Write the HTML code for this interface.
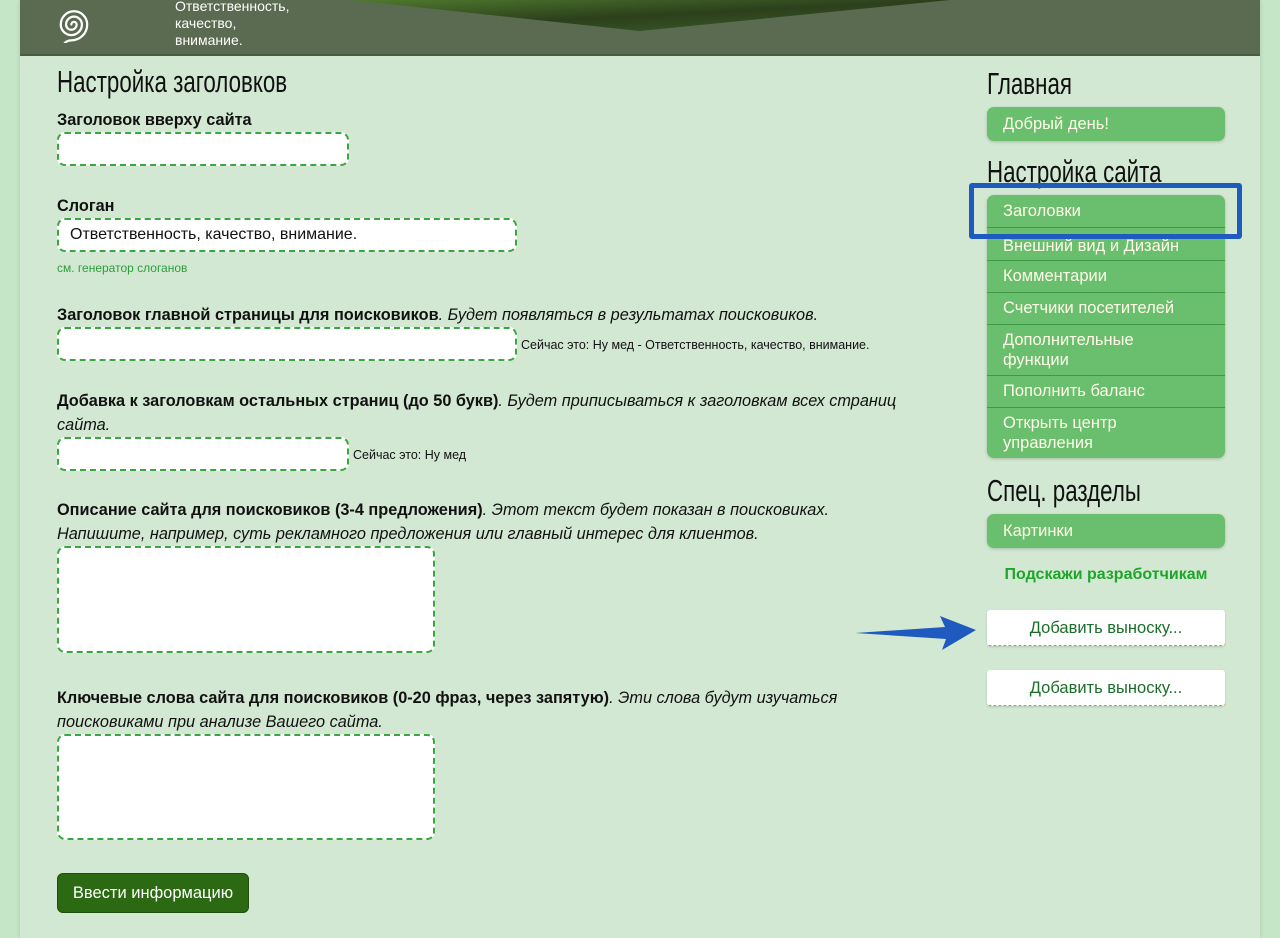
<!DOCTYPE html>
<html><head><meta charset="utf-8"><style>
*{box-sizing:border-box;margin:0;padding:0}
body{width:1280px;height:938px;overflow:hidden;background:#c6e6c8;font-family:"Liberation Sans","DejaVu Sans",sans-serif;color:#111;position:relative}
.page{position:absolute;left:20px;top:0;width:1240px;height:938px;background:#d3e8d3;box-shadow:0 0 4px rgba(0,0,0,.15)}
.hdr{position:absolute;left:20px;top:0;width:1240px;height:56px;background:#5a6b51;border-bottom:2px solid #4a5a44;overflow:hidden}
.slogan{position:absolute;left:155px;top:-2px;color:#fff;font-size:14px;line-height:17px}
.ab{position:absolute}
.t{font-size:31px;color:#111;font-weight:normal;transform:scaleX(.72);transform-origin:0 0;white-space:nowrap}
.lbl{font-size:16.3px;font-weight:bold;line-height:24px;white-space:nowrap}
.lbl i{font-weight:normal}
.inp{position:absolute;background:#fff;border:2px dashed #3aa63f;border-radius:8px;font-size:16px;padding:6px 11px}
.note{position:absolute;font-size:12.5px}
.menu{position:absolute;left:987px;width:238px;background:#6abf6e;border-radius:7px;color:#fffbe8;font-size:16.5px;box-shadow:0 1px 3px rgba(0,0,0,.2)}
.menu div{padding:5px 16px;border-top:1px solid #3d9a43;line-height:20px}
.menu div:first-child{border-top:none}
.btn2{position:absolute;left:987px;width:238px;height:36px;background:#fff;border-bottom:1px dashed #e0902a;border-radius:3px;text-align:center;line-height:36px;color:#1b6e2a;font-size:16.5px;box-shadow:0 1px 2px rgba(0,0,0,.15)}
</style></head><body>
<div class="page"></div>
<div class="hdr">
<svg class="ab" style="left:0;top:0" width="1240" height="56"><defs><linearGradient id="g" x1="0" y1="0" x2="1" y2="1"><stop offset="0" stop-color="#4f7a2e"/><stop offset=".5" stop-color="#2c3f1c"/><stop offset="1" stop-color="#3c6428"/></linearGradient></defs><polygon points="330,0 620,31 930,0" fill="url(#g)"/></svg>
<svg class="ab" style="left:34px;top:6px" width="36" height="37" viewBox="7 6 27 28"><path d="M20 20 a2 2 0 0 1 4 0 a4 4 0 0 1 -8 0 a6 6 0 0 1 12 0 a8 8 0 0 1 -16 0 a10 10 0 0 1 20 0 a12 12 0 0 1 -12 12 q-3 0 -5 2" fill="none" stroke="#fff" stroke-width="1.7" stroke-linecap="round"/></svg>
<div class="slogan">Ответственность,<br>качество,<br>внимание.</div>
</div>

<div class="ab t" style="left:57px;top:64px">Настройка заголовков</div>
<div class="ab lbl" style="left:57px;top:108px">Заголовок вверху сайта</div>
<div class="inp" style="left:57px;top:132px;width:292px;height:34px"></div>

<div class="ab lbl" style="left:57px;top:194px">Слоган</div>
<div class="inp" style="left:57px;top:218px;width:460px;height:34px;line-height:18px">Ответственность, качество, внимание.</div>
<div class="note" style="left:57px;top:261px;color:#2a9d35;font-size:12px">см. генератор слоганов</div>

<div class="ab lbl" style="left:57px;top:303px">Заголовок главной страницы для поисковиков<i>. Будет появляться в результатах поисковиков.</i></div>
<div class="inp" style="left:57px;top:327px;width:460px;height:34px"></div>
<div class="note" style="left:521px;top:338px">Сейчас это: Ну мед - Ответственность, качество, внимание.</div>

<div class="ab lbl" style="left:57px;top:389px">Добавка к заголовкам остальных страниц (до 50 букв)<i>. Будет приписываться к заголовкам всех страниц</i></div>
<div class="ab lbl" style="left:57px;top:413px"><i>сайта.</i></div>
<div class="inp" style="left:57px;top:437px;width:292px;height:34px"></div>
<div class="note" style="left:353px;top:448px">Сейчас это: Ну мед</div>

<div class="ab lbl" style="left:57px;top:498px">Описание сайта для поисковиков (3-4 предложения)<i>. Этот текст будет показан в поисковиках.</i></div>
<div class="ab lbl" style="left:57px;top:522px"><i>Напишите, например, суть рекламного предложения или главный интерес для клиентов.</i></div>
<div class="inp" style="left:57px;top:546px;width:378px;height:107px"></div>

<div class="ab lbl" style="left:57px;top:686px">Ключевые слова сайта для поисковиков (0-20 фраз, через запятую)<i>. Эти слова будут изучаться</i></div>
<div class="ab lbl" style="left:57px;top:710px"><i>поисковиками при анализе Вашего сайта.</i></div>
<div class="inp" style="left:57px;top:734px;width:378px;height:106px"></div>

<div class="ab" style="left:57px;top:873px;width:192px;height:40px;background:#2b6a12;border:1px solid #1e4f0c;border-radius:6px;color:#fff;font-size:16.5px;line-height:38px;text-align:center">Ввести информацию</div>

<div class="ab t" style="left:987px;top:66px">Главная</div>
<div class="menu" style="top:107px"><div style="padding:7px 16px">Добрый день!</div></div>
<div class="ab t" style="left:987px;top:154px">Настройка сайта</div>
<div class="menu" style="top:195px">
<div style="padding:6px 16px">Заголовки</div>
<div style="padding:8px 16px 4px">Внешний вид и Дизайн</div>
<div style="padding:5px 16px 6px">Комментарии</div>
<div style="padding:5px 16px 6px">Счетчики посетителей</div>
<div>Дополнительные<br>функции</div>
<div style="padding:5px 16px 6px">Пополнить баланс</div>
<div>Открыть центр<br>управления</div>
</div>
<div class="ab" style="left:969px;top:183px;width:273px;height:56px;border:5px solid #1f5bbf;border-radius:3px"></div>
<div class="ab t" style="left:987px;top:473px">Спец. разделы</div>
<div class="menu" style="top:514px"><div style="padding:7px 16px">Картинки</div></div>
<div class="ab" style="left:980px;top:566px;width:252px;text-align:center;color:#1fa52a;font-weight:bold;font-size:16px">Подскажи разработчикам</div>
<div class="btn2" style="top:610px">Добавить выноску...</div>
<div class="btn2" style="top:670px">Добавить выноску...</div>
<svg class="ab" style="left:850px;top:612px" width="130" height="42"><path d="M5 21 L95 15 L90 4 L126 18 L92 38 L96 27 Z" fill="#1f5bbf"/></svg>
</body></html>
